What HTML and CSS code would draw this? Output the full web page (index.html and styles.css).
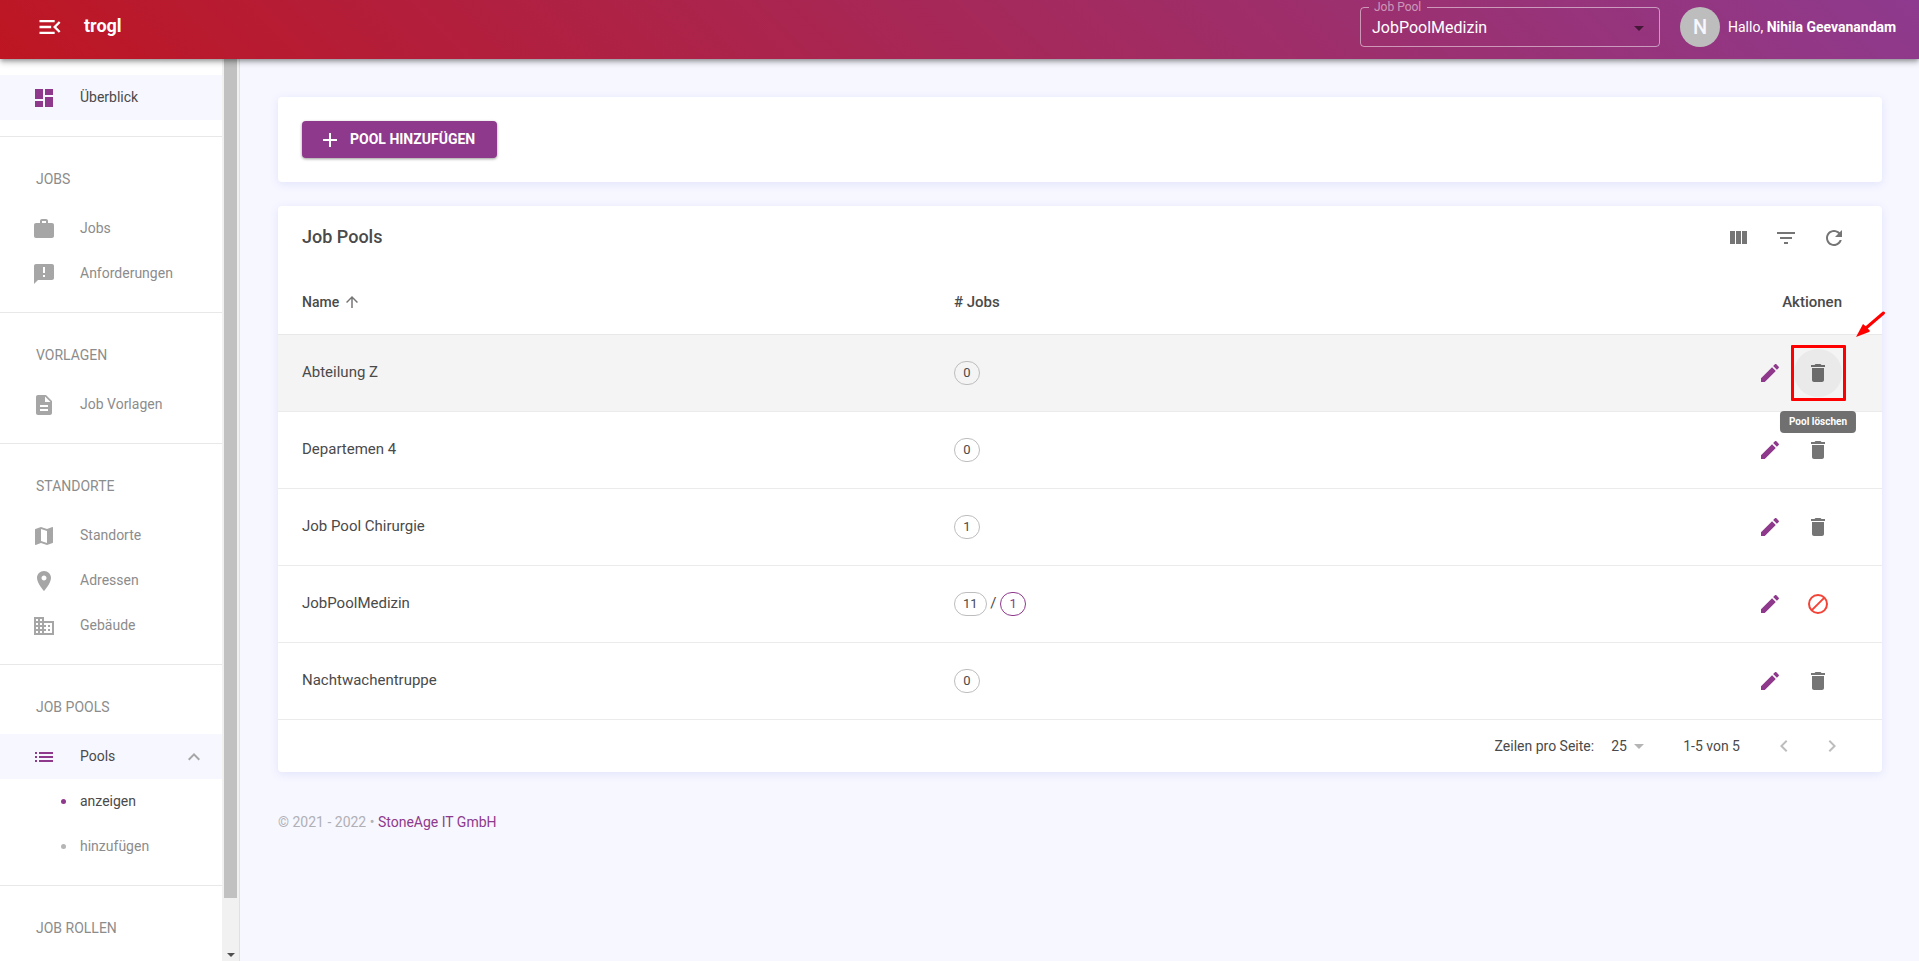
FILE: index.html
```html
<!DOCTYPE html>
<html lang="de">
<head>
<meta charset="utf-8">
<title>trogl – Job Pools</title>
<meta name="viewport" content="width=device-width, initial-scale=1">
<link rel="stylesheet" href="styles.css">
</head>
<body>
<svg class="sprite" aria-hidden="true">
  <symbol id="i-menu" viewBox="0 0 24 24"><path d="M3 18h13v-2H3v2zM3 13h10v-2H3v2zm0-7v2h13V6H3zm18 9.59L17.42 12 21 8.41 19.59 7l-5 5 5 5L21 15.590z"/></symbol>
  <symbol id="i-dashboard" viewBox="0 0 24 24"><path d="M3 13h8V3H3v10zm0 8h8v-6H3v6zm10 0h8V11h-8v10zm0-18v6h8V3h-8z"/></symbol>
  <symbol id="i-work" viewBox="0 0 24 24"><path d="M20 6h-4V4c0-1.110-.89-2-2-2h-4c-1.110 0-2 .89-2 2v2H4c-1.110 0-1.990.89-1.990 2L2 19c0 1.110.89 2 2 2h16c1.110 0 2-.89 2-2V8c0-1.110-.89-2-2-2zm-6 0h-4V4h4v2z"/></symbol>
  <symbol id="i-feedback" viewBox="0 0 24 24"><path d="M20 2H4c-1.100 0-1.990.9-1.990 2L2 22l4-4h14c1.100 0 2-.9 2-2V4c0-1.100-.9-2-2-2zm-7 13h-2v-2h2v2zm0-4h-2V5h2v6z"/></symbol>
  <symbol id="i-doc" viewBox="0 0 24 24"><path d="M14 2H6c-1.100 0-1.990.9-1.990 2L4 20c0 1.100.89 2 1.990 2H18c1.100 0 2-.9 2-2V8l-6-6zm2 16H8v-2h8v2zm0-4H8v-2h8v2zm-3-5V3.500L18.500 9H13z"/></symbol>
  <symbol id="i-map" viewBox="0 0 24 24"><path d="M20.500 3l-.16.030L15 5.100 9 3 3.360 4.900c-.21.070-.36.250-.36.480V20.500c0 .28.220.5.500.5l.16-.03L9 18.900l6 2.100 5.640-1.900c.21-.07.360-.25.360-.48V3.500c0-.28-.22-.5-.5-.5zM15 19l-6-2.110V5l6 2.110V19z"/></symbol>
  <symbol id="i-place" viewBox="0 0 24 24"><path d="M12 2C8.130 2 5 5.130 5 9c0 5.250 7 13 7 13s7-7.750 7-13c0-3.870-3.130-7-7-7zm0 9.500c-1.380 0-2.500-1.120-2.500-2.500s1.120-2.500 2.500-2.500 2.500 1.120 2.500 2.500-1.120 2.500-2.500 2.500z"/></symbol>
  <symbol id="i-building" viewBox="0 0 24 24"><path d="M12 7V3H2v18h20V7H12zM6 19H4v-2h2v2zm0-4H4v-2h2v2zm0-4H4V9h2v2zm0-4H4V5h2v2zm4 12H8v-2h2v2zm0-4H8v-2h2v2zm0-4H8V9h2v2zm0-4H8V5h2v2zm10 12h-8v-2h2v-2h-2v-2h2v-2h-2V9h8v10zm-2-8h-2v2h2v-2zm0 4h-2v2h2v-2z"/></symbol>
  <symbol id="i-list" viewBox="0 0 24 24"><path d="M3 13h2v-2H3v2zm0 4h2v-2H3v2zm0-8h2V7H3v2zm4 4h14v-2H7v2zm0 4h14v-2H7v2zM7 7v2h14V7H7z"/></symbol>
  <symbol id="i-up" viewBox="0 0 24 24"><path d="M12 8l-6 6 1.410 1.410L12 10.830l4.590 4.580L18 14z"/></symbol>
  <symbol id="i-plus" viewBox="0 0 24 24"><path d="M19 13h-6v6h-2v-6H5v-2h6V5h2v6h6v2z"/></symbol>
  <symbol id="i-columns" viewBox="0 0 24 24"><path d="M10 18h5V5h-5v13zm-6 0h5V5H4v13zM16 5v13h5V5h-5z"/></symbol>
  <symbol id="i-filter" viewBox="0 0 24 24"><path d="M10 18h4v-2h-4v2zM3 6v2h18V6H3zm3 7h12v-2H6v2z"/></symbol>
  <symbol id="i-refresh" viewBox="0 0 24 24"><path d="M17.650 6.350C16.200 4.900 14.210 4 12 4c-4.420 0-7.990 3.580-7.990 8s3.570 8 7.990 8c3.730 0 6.840-2.550 7.730-6h-2.080c-.82 2.330-3.040 4-5.650 4-3.310 0-6-2.690-6-6s2.690-6 6-6c1.660 0 3.140.69 4.220 1.780L13 11h7V4l-2.350 2.350z"/></symbol>
  <symbol id="i-arrow-up" viewBox="0 0 24 24"><path d="M4 12l1.410 1.410L11 7.830V20h2V7.830l5.580 5.590L20 12l-8-8-8 8z"/></symbol>
  <symbol id="i-edit" viewBox="0 0 24 24"><path d="M3 17.250V21h3.750L17.810 9.940l-3.750-3.750L3 17.250zM20.710 7.040c.39-.39.390-1.020 0-1.410l-2.340-2.340c-.39-.39-1.020-.39-1.410 0l-1.830 1.830 3.750 3.750 1.830-1.830z"/></symbol>
  <symbol id="i-delete" viewBox="0 0 24 24"><path d="M6 19c0 1.100.9 2 2 2h8c1.100 0 2-.9 2-2V7H6v12zM19 4h-3.500l-1-1h-5l-1 1H5v2h14V4z"/></symbol>
  <symbol id="i-block" viewBox="0 0 24 24"><g fill="none" stroke="currentColor" stroke-width="2"><circle cx="12" cy="12" r="9"/><path d="M5.600 18.400L18.400 5.600"/></g></symbol>
  <symbol id="i-caret" viewBox="0 0 24 24"><path d="M7 10l5 5 5-5z"/></symbol>
  <symbol id="i-left" viewBox="0 0 24 24"><path d="M15.410 7.410L14 6l-6 6 6 6 1.410-1.410L10.830 12z"/></symbol>
  <symbol id="i-right" viewBox="0 0 24 24"><path d="M10 6L8.590 7.410 13.170 12l-4.580 4.590L10 18l6-6z"/></symbol>
</svg>

<header class="topbar">
  <button class="menu-toggle" type="button" aria-label="Menü einklappen"><svg class="icon-lg"><use href="#i-menu"/></svg></button>
  <span class="brand">trogl</span>
  <fieldset class="pool-field">
    <legend><label for="pool">Job Pool</label></legend>
    <div class="pool-control">
      <select id="pool"><option>JobPoolMedizin</option></select>
      <svg class="icon"><use href="#i-caret"/></svg>
    </div>
  </fieldset>
  <div class="user">
    <span class="avatar">N</span>
    <span>Hallo, <b>Nihila Geevanandam</b></span>
  </div>
</header>

<div class="shell">
  <aside class="sidebar">
    <nav class="nav">
      <section class="nav-group">
        <a class="nav-item active" href="#"><svg class="icon"><use href="#i-dashboard"/></svg><span>Überblick</span></a>
      </section>
      <section class="nav-group">
        <h2>JOBS</h2>
        <a class="nav-item" href="#"><svg class="icon"><use href="#i-work"/></svg><span>Jobs</span></a>
        <a class="nav-item" href="#"><svg class="icon"><use href="#i-feedback"/></svg><span>Anforderungen</span></a>
      </section>
      <section class="nav-group">
        <h2>VORLAGEN</h2>
        <a class="nav-item" href="#"><svg class="icon"><use href="#i-doc"/></svg><span>Job Vorlagen</span></a>
      </section>
      <section class="nav-group">
        <h2>STANDORTE</h2>
        <a class="nav-item" href="#"><svg class="icon"><use href="#i-map"/></svg><span>Standorte</span></a>
        <a class="nav-item" href="#"><svg class="icon"><use href="#i-place"/></svg><span>Adressen</span></a>
        <a class="nav-item" href="#"><svg class="icon"><use href="#i-building"/></svg><span>Gebäude</span></a>
      </section>
      <section class="nav-group">
        <h2>JOB POOLS</h2>
        <a class="nav-item active" href="#"><svg class="icon"><use href="#i-list"/></svg><span>Pools</span><svg class="icon expand"><use href="#i-up"/></svg></a>
        <a class="nav-item sub current" href="#"><i class="dot"></i><span>anzeigen</span></a>
        <a class="nav-item sub" href="#"><i class="dot"></i><span>hinzufügen</span></a>
      </section>
      <section class="nav-group">
        <h2>JOB ROLLEN</h2>
      </section>
    </nav>
    <div class="scrollbar" aria-hidden="true">
      <div class="thumb"></div>
      <div class="scroll-end"></div>
    </div>
  </aside>

  <main class="content">
    <section class="card actions-card">
      <button class="add" type="button"><svg class="icon"><use href="#i-plus"/></svg><span>POOL HINZUFÜGEN</span></button>
    </section>

    <section class="card">
      <div class="toolbar">
        <h1>Job Pools</h1>
        <button class="icon-btn" type="button" aria-label="Spalten"><svg class="icon"><use href="#i-columns"/></svg></button>
        <button class="icon-btn" type="button" aria-label="Filter"><svg class="icon"><use href="#i-filter"/></svg></button>
        <button class="icon-btn" type="button" aria-label="Aktualisieren"><svg class="icon"><use href="#i-refresh"/></svg></button>
      </div>
      <table class="pools">
        <thead>
          <tr><th class="col-name"><span class="sort">Name<svg class="icon-sm"><use href="#i-arrow-up"/></svg></span></th><th># Jobs</th><th class="col-actions">Aktionen</th></tr>
        </thead>
        <tbody>
          <tr class="hovered">
            <td>Abteilung Z</td>
            <td><span class="badge">0</span></td>
            <td><div class="row-actions">
              <button class="icon-btn edit" type="button" aria-label="Bearbeiten"><svg class="icon"><use href="#i-edit"/></svg></button>
              <span class="marked">
                <button class="icon-btn pressed" type="button" aria-describedby="tip" aria-label="Pool löschen"><svg class="icon"><use href="#i-delete"/></svg></button>
                <span class="marker"></span>
                <svg class="pointer" viewBox="0 0 30 28"><path d="M27.500 2L10 17" stroke="#f00" stroke-width="3" stroke-linecap="round"/><path d="M0 26L7 13L10 15.500L14 20L13 21z" fill="#f00"/></svg>
                <span class="tooltip" id="tip" role="tooltip">Pool löschen</span>
              </span>
            </div></td>
          </tr>
          <tr>
            <td>Departemen 4</td>
            <td><span class="badge">0</span></td>
            <td><div class="row-actions">
              <button class="icon-btn edit" type="button" aria-label="Bearbeiten"><svg class="icon"><use href="#i-edit"/></svg></button>
              <button class="icon-btn" type="button" aria-label="Löschen"><svg class="icon"><use href="#i-delete"/></svg></button>
            </div></td>
          </tr>
          <tr>
            <td>Job Pool Chirurgie</td>
            <td><span class="badge">1</span></td>
            <td><div class="row-actions">
              <button class="icon-btn edit" type="button" aria-label="Bearbeiten"><svg class="icon"><use href="#i-edit"/></svg></button>
              <button class="icon-btn" type="button" aria-label="Löschen"><svg class="icon"><use href="#i-delete"/></svg></button>
            </div></td>
          </tr>
          <tr>
            <td>JobPoolMedizin</td>
            <td><span class="badge">11</span> / <span class="badge accent">1</span></td>
            <td><div class="row-actions">
              <button class="icon-btn edit" type="button" aria-label="Bearbeiten"><svg class="icon"><use href="#i-edit"/></svg></button>
              <button class="icon-btn blocked" type="button" aria-label="Löschen nicht möglich"><svg class="icon"><use href="#i-block"/></svg></button>
            </div></td>
          </tr>
          <tr>
            <td>Nachtwachentruppe</td>
            <td><span class="badge">0</span></td>
            <td><div class="row-actions">
              <button class="icon-btn edit" type="button" aria-label="Bearbeiten"><svg class="icon"><use href="#i-edit"/></svg></button>
              <button class="icon-btn" type="button" aria-label="Löschen"><svg class="icon"><use href="#i-delete"/></svg></button>
            </div></td>
          </tr>
        </tbody>
      </table>
      <div class="pager">
        <label for="rows">Zeilen pro Seite:</label>
        <div class="rows-control">
          <select id="rows"><option>25</option></select>
          <svg class="icon"><use href="#i-caret"/></svg>
        </div>
        <span class="range">1-5 von 5</span>
        <button class="icon-btn" type="button" disabled aria-label="Vorherige Seite"><svg class="icon"><use href="#i-left"/></svg></button>
        <button class="icon-btn" type="button" disabled aria-label="Nächste Seite"><svg class="icon"><use href="#i-right"/></svg></button>
      </div>
    </section>

    <footer class="foot">© 2021 - 2022 • <a href="#">StoneAge IT GmbH</a></footer>
  </main>
</div>
</body>
</html>
```
FILE: styles.css
```css
* { box-sizing: border-box; }

:root {
  --accent: #8e398c;
  --text: #4a4a4a;
  --muted: #8c8c8c;
  --page: #f6f7ff;
}

body {
  margin: 0;
  height: 100vh;
  display: flex;
  flex-direction: column;
  overflow: hidden;
  background: var(--page);
  color: var(--text);
  font-family: Roboto, "Liberation Sans", sans-serif;
  font-size: 14px;
  line-height: 20px;
}

button, select {
  font: inherit;
  color: inherit;
  border: 0;
  padding: 0;
  background: none;
}

a { color: inherit; text-decoration: none; }

.sprite { position: absolute; width: 0; height: 0; }
.icon, .icon-lg, .icon-sm { fill: currentColor; flex: none; display: block; }
.icon { width: 24px; height: 24px; }
.icon-lg { width: 28px; height: 28px; }
.icon-sm { width: 18px; height: 18px; }

/* Top bar */
.topbar {
  display: flex;
  align-items: flex-start;
  flex: none;
  height: 59px;
  padding: 0 19px 0 36px;
  background: linear-gradient(45deg, #be1622 0%, #8e3a8e 100%);
  color: #fff;
  box-shadow: 0 2px 4px -1px rgba(0, 0, 0, .3), 0 4px 5px rgba(0, 0, 0, .15), 0 1px 10px rgba(0, 0, 0, .12);
  z-index: 2;
}
.menu-toggle { margin-top: 13px; }
.brand {
  margin: 14px auto 0 20px;
  font-size: 18px;
  line-height: 24px;
  font-weight: 700;
}
.pool-field {
  width: 300px;
  height: 47px;
  margin: 0 20px 0 0;
  padding: 0 8px 0 11px;
  border: 1px solid rgba(255, 255, 255, .5);
  border-radius: 4px;
}
.pool-field legend {
  margin-left: -3px;
  padding: 0 6px 0 5px;
  font-size: 12px;
  line-height: 14px;
  color: rgba(255, 255, 255, .5);
}
.pool-control { display: flex; align-items: center; color: rgba(0, 0, 0, .54); padding-top: 2px; }
.pool-control select {
  flex: 1;
  appearance: none;
  font-size: 16px;
  line-height: 24px;
  color: #fff;
}
.user { display: flex; align-items: center; gap: 8px; min-width: 220px; padding-top: 7px; }
.avatar {
  display: grid;
  place-items: center;
  width: 40px;
  height: 40px;
  border-radius: 50%;
  background: #bdbdbd;
  color: var(--page);
  font-size: 20px;
  font-weight: 500;
}

/* Sidebar */
.shell { display: flex; flex: 1; min-height: 0; }
.sidebar {
  display: flex;
  flex: none;
  width: 240px;
  background: #fff;
  border-right: 1px solid #e0e0e0;
}
.nav { flex: 1; padding-top: 16px; overflow: hidden; }
.nav-group { padding-bottom: 16px; border-bottom: 1px solid #e8e8e8; }
.nav-group:last-child { border: 0; }
.nav h2 {
  margin: 0;
  padding: 32px 36px 17px;
  font-size: 14px;
  line-height: 20px;
  font-weight: 400;
  color: var(--muted);
}
.nav-item {
  display: flex;
  align-items: center;
  gap: 24px;
  height: 45px;
  padding: 0 16px 0 32px;
  color: var(--muted);
}
.nav-item span, .add span { padding-bottom: 2px; }
.nav-item .icon { color: #a6a6a6; }
.nav-item.active { background: var(--page); color: var(--text); }
.nav-item.active .icon { color: var(--accent); }
.nav-item.active .expand { color: #a6a6a6; margin-left: auto; }
.nav-item.sub { padding-left: 61px; gap: 14px; }
.dot { width: 5px; height: 5px; border-radius: 50%; background: #b5b5b5; }
.nav-item.current { color: var(--text); }
.current .dot { background: var(--accent); }
.scrollbar {
  display: flex;
  flex-direction: column;
  justify-content: space-between;
  align-items: center;
  width: 17px;
  background: #f1f1f1;
}
.thumb { width: 13px; height: 93%; background: #c1c1c1; }
.scroll-end {
  margin-bottom: 4px;
  border: 4px solid transparent;
  border-top-color: #505050;
  border-bottom: 0;
}

/* Content */
.content { flex: 1; min-width: 0; padding: 38px 37px 0 38px; }
.card {
  margin-bottom: 24px;
  background: #fff;
  border-radius: 4px;
  box-shadow: 0 2px 10px rgba(90, 90, 220, .12);
}
.actions-card { padding: 24px; }
.add {
  display: flex;
  align-items: center;
  gap: 8px;
  min-width: 195px;
  height: 37px;
  padding: 0 16px;
  border-radius: 4px;
  background: var(--accent);
  color: #fff;
  font-weight: 700;
  box-shadow: 0 1px 3px rgba(0, 0, 0, .4);
}
.toolbar { display: flex; align-items: center; height: 64px; padding: 0 24px; }
.toolbar h1 { flex: 1; margin: 0; padding-bottom: 2px; font-size: 18px; line-height: 24px; font-weight: 500; }
.icon-btn {
  display: grid;
  place-items: center;
  width: 48px;
  height: 48px;
  border-radius: 50%;
  color: #757575;
}
.icon-btn.edit { color: var(--accent); }
.icon-btn.blocked { color: #f44336; }
.icon-btn.pressed { background: #eaeaea; color: #6b6b6b; }
.icon-btn:disabled { color: #bdbdbd; }

.pools { width: 100%; border-collapse: collapse; text-align: left; font-size: 15px; }
.pools th { height: 64px; padding: 0 24px; font-weight: 500; border-bottom: 1px solid #e8e8e8; }
.pools td { height: 77px; padding: 0 24px; border-bottom: 1px solid #ebebeb; }
.pools td:first-child { padding-bottom: 2px; }
.pools .col-name { width: 652px; }
.pools .col-actions { text-align: right; padding-right: 40px; }
.pools td:last-child { padding-right: 40px; }
.hovered { background: #f4f4f4; }
.sort { display: flex; align-items: center; gap: 4px; font-size: 14px; }
.sort svg { color: #757575; }
.badge {
  display: inline-block;
  min-width: 26px;
  padding: 0 8px;
  border: 1px solid #bdbdbd;
  border-radius: 12px;
  text-align: center;
  font-size: 13px;
  line-height: 22px;
}
.badge.accent { border-color: var(--accent); color: var(--accent); }
.row-actions { display: flex; justify-content: flex-end; }

/* Highlighted delete button with its marker, arrow and tooltip */
.marked { position: relative; }
.marker { position: absolute; inset: -4px -4px -4px -3px; border: 3px solid #f00; border-radius: 1px; }
.pointer { position: absolute; left: 62px; top: -38px; width: 30px; height: 28px; }
.tooltip {
  position: absolute;
  top: 62px;
  left: 50%;
  transform: translateX(-50%);
  padding: 0 9px;
  border-radius: 4px;
  background: #707070;
  color: #fff;
  font-size: 10px;
  line-height: 22px;
  font-weight: 700;
  white-space: nowrap;
  z-index: 1;
}

.pager { display: flex; align-items: center; justify-content: flex-end; height: 52px; padding-right: 26px; }
.rows-control { display: flex; align-items: center; margin: 0 32px 0 17px; color: #b5b5b5; }
.rows-control select { appearance: none; color: var(--text); }
.range { margin-right: 20px; }

.foot { padding-top: 16px; color: #b0b0b5; }
.foot a { color: var(--accent); }
```
